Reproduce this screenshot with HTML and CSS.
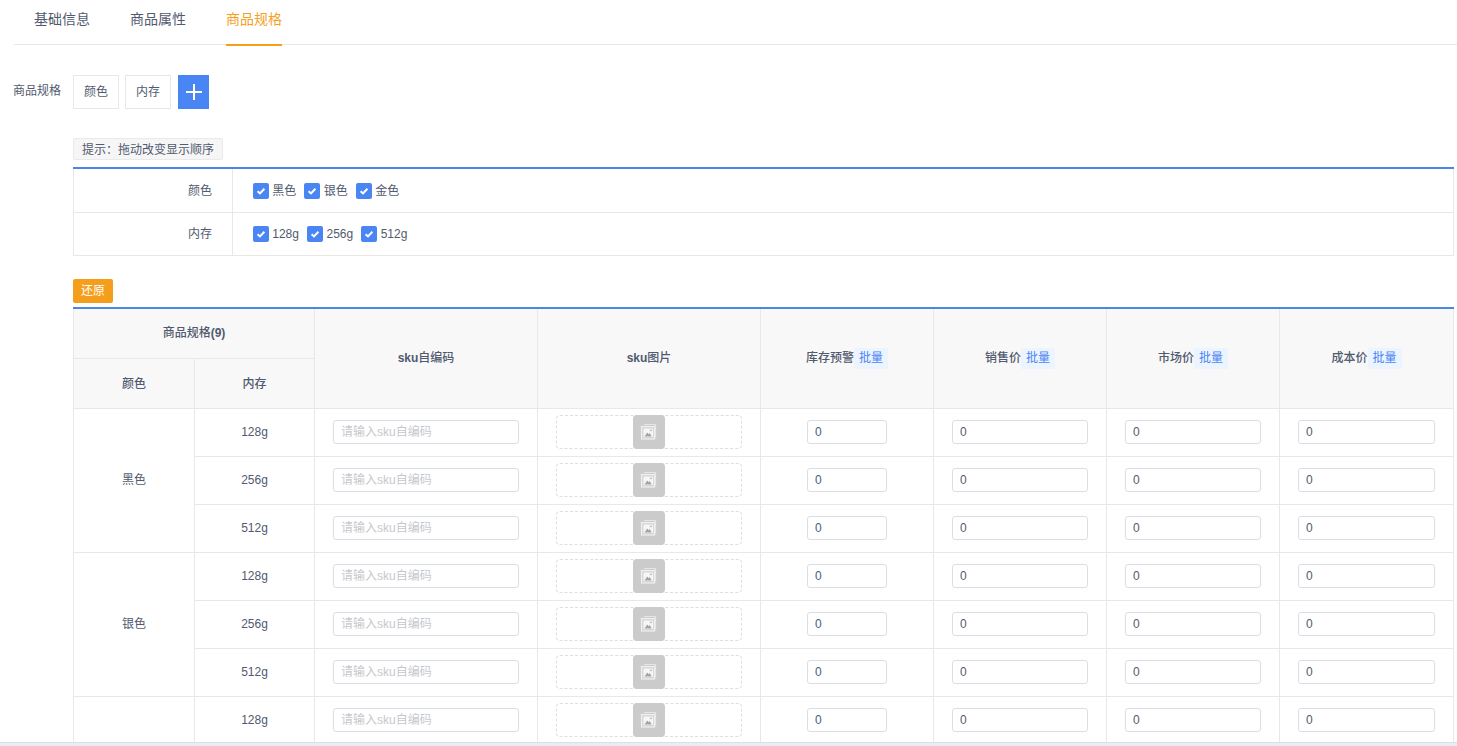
FILE: index.html
```html
<!DOCTYPE html>
<html lang="zh-CN">
<head>
<meta charset="utf-8">
<title>商品规格</title>
<link rel="stylesheet" href="styles.css">
</head>
<body>
<svg class="defs" width="0" height="0" aria-hidden="true">
  <symbol id="pic" viewBox="0 0 18 18">
    <path d="M4 1.5h11.5v13" fill="none" stroke="#e4e4e4" stroke-width="1.2"/>
    <rect x="1.5" y="3.5" width="13" height="12.5" fill="#d6d6d6" stroke="#efefef" stroke-width="1.2"/>
    <rect x="3.5" y="5.5" width="9.5" height="8.5" fill="#f6f6f6"/>
    <path d="M4.5 13.5l2.8-4 1.3 1.7 1.1-1.1 2 3.4z" fill="#a4a4a4"/>
    <circle cx="11" cy="7.4" r=".9" fill="#b5b5b5"/>
  </symbol>
  <symbol id="chk" viewBox="0 0 16 16">
    <path d="M4.6 8.2l2.4 2.2L11.4 5.8" fill="none" stroke="#fff" stroke-width="2"/>
  </symbol>
</svg>
<div class="page">
  <nav class="tabs">
    <span class="tab">基础信息</span>
    <span class="tab">商品属性</span>
    <span class="tab tab-on">商品规格</span>
  </nav>
  <section class="spec-row">
    <span class="spec-label">商品规格</span>
    <span class="spec-tag">颜色</span>
    <span class="spec-tag">内存</span>
    <button class="spec-add" type="button" aria-label="添加"><svg width="16" height="16" viewBox="0 0 16 16"><path d="M8 0v16M0 8h16" stroke="#fff" stroke-width="2"/></svg></button>
  </section>
  <div class="body">
    <div class="tip">提示：拖动改变显示顺序</div>
    <table class="attr">
      <colgroup><col class="attr-c1"><col></colgroup>
      <tr class="attr-first">
        <th>颜色</th>
        <td><div class="checks">
          <label class="check"><svg class="box"><use href="#chk"/></svg>黑色</label>
          <label class="check"><svg class="box"><use href="#chk"/></svg>银色</label>
          <label class="check"><svg class="box"><use href="#chk"/></svg>金色</label>
        </div></td>
      </tr>
      <tr>
        <th>内存</th>
        <td><div class="checks">
          <label class="check"><svg class="box"><use href="#chk"/></svg>128g</label>
          <label class="check"><svg class="box"><use href="#chk"/></svg>256g</label>
          <label class="check"><svg class="box"><use href="#chk"/></svg>512g</label>
        </div></td>
      </tr>
    </table>
    <button class="restore" type="button">还原</button>
    <table class="sku">
      <colgroup>
        <col class="c-a"><col class="c-b"><col class="c-c"><col class="c-c"><col class="c-d"><col class="c-d"><col class="c-d"><col class="c-e">
      </colgroup>
      <thead>
        <tr class="h1">
          <th colspan="2">商品规格<b>(9)</b></th>
          <th rowspan="2"><b>sku</b>自编码</th>
          <th rowspan="2"><b>sku</b>图片</th>
          <th rowspan="2">库存预警<span class="batch">批量</span></th>
          <th rowspan="2">销售价<span class="batch">批量</span></th>
          <th rowspan="2">市场价<span class="batch">批量</span></th>
          <th rowspan="2">成本价<span class="batch">批量</span></th>
        </tr>
        <tr class="h2"><th>颜色</th><th>内存</th></tr>
      </thead>
      <tbody>
        <tr>
          <td rowspan="3">黑色</td><td>128g</td>
          <td><input class="field" placeholder="请输入sku自编码"></td>
          <td><div class="drop"><span class="thumb"><svg width="18" height="18"><use href="#pic"/></svg></span></div></td>
          <td><input class="field short" value="0"></td><td><input class="field" value="0"></td><td><input class="field" value="0"></td><td><input class="field" value="0"></td>
        </tr>
        <tr>
          <td>256g</td>
          <td><input class="field" placeholder="请输入sku自编码"></td>
          <td><div class="drop"><span class="thumb"><svg width="18" height="18"><use href="#pic"/></svg></span></div></td>
          <td><input class="field short" value="0"></td><td><input class="field" value="0"></td><td><input class="field" value="0"></td><td><input class="field" value="0"></td>
        </tr>
        <tr>
          <td>512g</td>
          <td><input class="field" placeholder="请输入sku自编码"></td>
          <td><div class="drop"><span class="thumb"><svg width="18" height="18"><use href="#pic"/></svg></span></div></td>
          <td><input class="field short" value="0"></td><td><input class="field" value="0"></td><td><input class="field" value="0"></td><td><input class="field" value="0"></td>
        </tr>
        <tr>
          <td rowspan="3">银色</td><td>128g</td>
          <td><input class="field" placeholder="请输入sku自编码"></td>
          <td><div class="drop"><span class="thumb"><svg width="18" height="18"><use href="#pic"/></svg></span></div></td>
          <td><input class="field short" value="0"></td><td><input class="field" value="0"></td><td><input class="field" value="0"></td><td><input class="field" value="0"></td>
        </tr>
        <tr>
          <td>256g</td>
          <td><input class="field" placeholder="请输入sku自编码"></td>
          <td><div class="drop"><span class="thumb"><svg width="18" height="18"><use href="#pic"/></svg></span></div></td>
          <td><input class="field short" value="0"></td><td><input class="field" value="0"></td><td><input class="field" value="0"></td><td><input class="field" value="0"></td>
        </tr>
        <tr>
          <td>512g</td>
          <td><input class="field" placeholder="请输入sku自编码"></td>
          <td><div class="drop"><span class="thumb"><svg width="18" height="18"><use href="#pic"/></svg></span></div></td>
          <td><input class="field short" value="0"></td><td><input class="field" value="0"></td><td><input class="field" value="0"></td><td><input class="field" value="0"></td>
        </tr>
        <tr>
          <td rowspan="3"></td><td>128g</td>
          <td><input class="field" placeholder="请输入sku自编码"></td>
          <td><div class="drop"><span class="thumb"><svg width="18" height="18"><use href="#pic"/></svg></span></div></td>
          <td><input class="field short" value="0"></td><td><input class="field" value="0"></td><td><input class="field" value="0"></td><td><input class="field" value="0"></td>
        </tr>
      </tbody>
    </table>
  </div>
</div>
<div class="strip"></div>
</body>
</html>
```
FILE: styles.css
```css
* { box-sizing: border-box; }
html, body { margin: 0; height: 100%; overflow: hidden; background: #fff; }
body {
  display: flex;
  flex-direction: column;
  font: 12px/1.5 "Liberation Sans", "Noto Sans CJK SC", sans-serif;
  color: #515a6e;
}
.defs { display: block; height: 0; }
.page { flex: 1; min-height: 0; overflow: hidden; }
.strip { height: 4px; flex: none; background: #e9ecf4; border-top: 1px solid #dcdfe9; }

.tabs {
  display: flex;
  gap: 40px;
  height: 45px;
  margin-left: 14px;
  padding-left: 20px;
  border-bottom: 1px solid #e8e8e8;
}
.tab { height: 46px; font-size: 14px; line-height: 39px; color: #515a6e; }
.tab-on { color: #f5a01e; border-bottom: 2px solid #f59e17; }

.spec-row { display: flex; align-items: flex-start; margin-top: 30px; padding-left: 13px; }
.spec-label { width: 60px; line-height: 33px; }
.spec-tag {
  width: 46px;
  height: 34px;
  margin-right: 6px;
  border: 1px solid #e8e8e8;
  text-align: center;
  line-height: 32px;
}
.spec-tag + .spec-add { margin-left: 1px; }
.spec-add {
  display: flex;
  align-items: center;
  justify-content: center;
  width: 31px;
  height: 34px;
  padding: 0;
  border: 0;
  background: #4a86f3;
}

.body { padding-left: 73px; padding-right: 3px; }
.tip {
  width: 150px;
  height: 22px;
  margin-top: 29px;
  padding-top: 1px;
  border: 1px solid #e8eaec;
  border-radius: 2px;
  background: #f6f6f7;
  text-align: center;
  line-height: 20px;
}
.attr {
  width: 100%;
  margin-top: 7px;
  border-collapse: collapse;
  table-layout: fixed;
  border-top: 2px solid #4a86e8;
}
.attr-c1 { width: 159px; }
.attr th, .attr td { height: 43px; padding: 0; border: 1px solid #e8e8e8; }
.attr .attr-first th, .attr .attr-first td { height: 44px; padding-top: 2px; border-top: 0; }
.attr th { padding-right: 20px; font-weight: 400; text-align: right; }
.attr td { padding-left: 19.75px; }
.checks { display: flex; gap: 8px; }
.check { display: flex; align-items: center; gap: 3.5px; }
.box { width: 16px; height: 16px; border-radius: 2px; background: #4a86f3; }

.restore {
  display: block;
  width: 40px;
  height: 24px;
  margin-top: 23px;
  padding: 1px 0 0;
  border: 0;
  border-radius: 2px;
  background: #f59e1c;
  color: #fff;
  font: inherit;
}
.sku {
  width: 1380px;
  margin-top: 4px;
  border-collapse: collapse;
  table-layout: fixed;
  border-top: 2px solid #4a86e8;
}
.c-a { width: 121px; }
.c-b { width: 120px; }
.c-c { width: 223px; }
.c-d { width: 173px; }
.c-e { width: 174px; }
.sku th, .sku td {
  padding: 0 18px;
  border: 1px solid #e8e8e8;
  text-align: center;
}
.sku thead tr:first-child th { border-top: 0; }
.sku th { background: #f8f8f9; font-weight: 500; vertical-align: middle; }
.sku th b { font-weight: 700; }
.h1 { height: 51px; }
.h2 { height: 50px; }
.sku tbody tr { height: 48px; }
.sku td { padding-bottom: 2px; font-weight: 400; }
.batch {
  display: inline-block;
  width: 34px;
  height: 21px;
  background: #ecf5ff;
  color: #4a86f3;
  font-weight: 400;
  line-height: 21px;
  vertical-align: middle;
}
.field {
  display: block;
  width: 100%;
  height: 24px;
  padding: 0 7px;
  border: 1px solid #dcdee2;
  border-radius: 3px;
  background: #fff;
  color: #515a6e;
  font: inherit;
  outline: 0;
}
.field::placeholder { color: #c5c8ce; opacity: 1; }
.short { width: 80px; margin: 0 auto; }
.drop {
  display: flex;
  justify-content: center;
  height: 34px;
  border: 1px dashed #dcdee2;
  border-radius: 4px;
}
.thumb {
  display: flex;
  align-items: center;
  justify-content: center;
  width: 32px;
  height: 34px;
  margin-top: -1px;
  border-radius: 4px;
  background: #cbcbcb;
}
```
